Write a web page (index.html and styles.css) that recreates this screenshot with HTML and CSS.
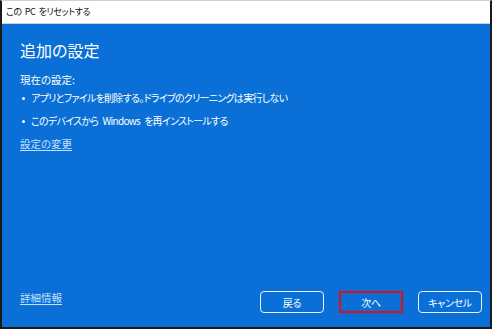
FILE: index.html
```html
<!DOCTYPE html>
<html lang="ja">
<head>
  <meta charset="UTF-8">
  <title>この PC をリセットする</title>
  <link rel="stylesheet" href="styles.css">
</head>
<body>

  <div class="window">
    <div class="titlebar">この PC をリセットする</div>
    <div class="content">
      <h2>追加の設定</h2>
      <div class="label">現在の設定:</div>
      <ul class="settings">
        <li>アプリとファイルを削除する。ドライブのクリーニングは実行しない</li>
        <li>このデバイスから Windows を再インストールする</li>
      </ul>
      <a class="link" href="#">設定の変更</a>
      <div class="spacer"></div>
      <div class="footer">
        <a class="link" href="#">詳細情報</a>
        <div class="buttons">
          <button class="btn">戻る</button>
          <button class="btn highlight">次へ</button>
          <button class="btn">キャンセル</button>
        </div>
      </div>
    </div>
  </div>

</body>
</html>
```

FILE: styles.css
```css
html, body {
  margin: 0;
  padding: 0;
}

body {
  font-family: "Noto Sans CJK JP", "Noto Sans", sans-serif;
  font-feature-settings: "palt";
  background: #ffffff;
}

.window {
  width: 492px;
  height: 329px;
  box-sizing: border-box;
  border: 2px solid #1a1a1a;
  border-top: 1px solid #d0d0d0;
  display: flex;
  flex-direction: column;
}

.titlebar {
  height: 22px;
  background: #ffffff;
  color: #111;
  font-size: 9px;
  letter-spacing: -0.4px;
  word-spacing: 1.5px;
  line-height: 22px;
  padding-left: 4px;
  border-bottom: 1px solid #c8d4e0;
}

.content {
  flex: 1;
  background: #0a6fd6;
  color: #ffffff;
  padding: 14px 8px 14px 18px;
  display: flex;
  flex-direction: column;
}

h2 {
  margin: 0 0 11px 0;
  font-weight: normal;
  font-size: 16px;
  line-height: 24px;
}

.label {
  font-size: 10.5px;
  line-height: 14px;
  margin-bottom: 4px;
}

.settings {
  margin: 0;
  padding: 0;
  list-style: none;
  font-size: 10px;
  letter-spacing: -0.7px;
  word-spacing: 2.5px;
}

.settings li {
  position: relative;
  padding-left: 11px;
  line-height: 14px;
  margin-bottom: 9px;
}

.settings li::before {
  content: "";
  position: absolute;
  left: 2px;
  top: 6px;
  width: 3px;
  height: 3px;
  border-radius: 50%;
  background: #ffffff;
}

.link {
  color: #c4e2ff;
  font-size: 10.5px;
  line-height: 14px;
  text-decoration: underline;
  text-underline-offset: 2px;
  align-self: flex-start;
}

.spacer {
  flex: 1;
}

.footer {
  display: flex;
  align-items: center;
  justify-content: space-between;
}

.buttons {
  display: flex;
  gap: 15px;
}

.btn {
  width: 64px;
  height: 22px;
  box-sizing: border-box;
  background: #0a6fd6;
  color: #ffffff;
  border: 1.5px solid #e8f2ff;
  border-radius: 4px;
  font-family: inherit;
  font-feature-settings: "palt";
  font-size: 10px;
  letter-spacing: -0.3px;
  padding: 0;
  cursor: pointer;
}

.btn.highlight {
  border: 2px solid #e0101a;
  border-radius: 0;
}
```
